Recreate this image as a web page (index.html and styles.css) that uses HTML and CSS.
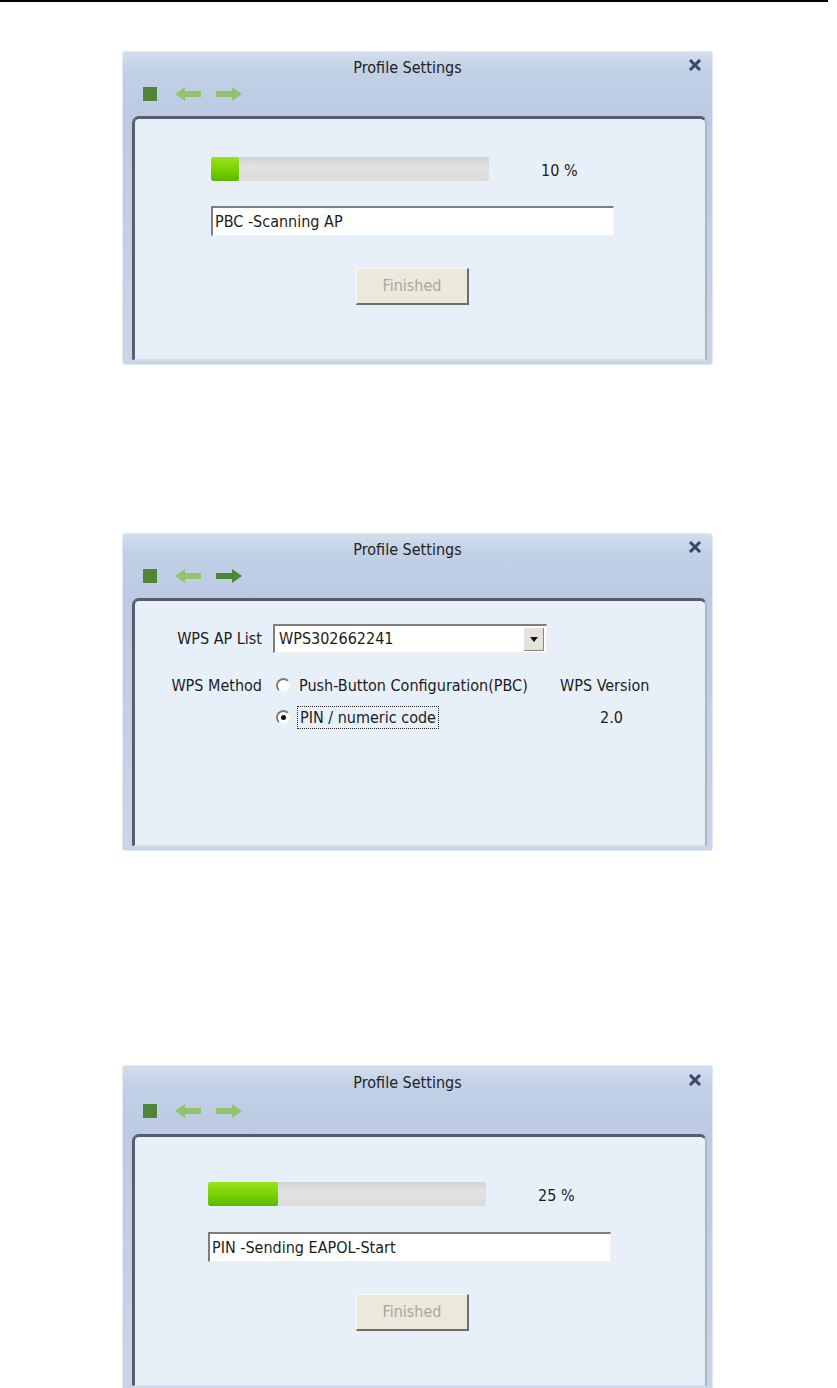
FILE: index.html
```html
<!DOCTYPE html>
<html lang="en">
<head>
    <meta charset="UTF-8">
    <title>Profile Settings</title>
    <link rel="stylesheet" href="styles.css">
</head>
<body>
    <div class="rule"></div>

    <!-- PBC scanning -->
    <div class="window win-first">
        <div class="titlebar">
            <span></span>
            <span class="title">Profile Settings</span>
            <svg class="close" viewBox="0 0 14 12"><path d="M2 1 L12 11 M12 1 L2 11"/></svg>
        </div>
        <div class="toolbar">
            <span class="stop"></span>
            <svg class="arrow off" viewBox="0 0 26 14"><path d="M0 7 L10 0 L10 4 L26 4 L26 10 L10 10 L10 14 Z"/></svg>
            <svg class="arrow off" viewBox="0 0 26 14"><path d="M26 7 L16 0 L16 4 L0 4 L0 10 L16 10 L16 14 Z"/></svg>
        </div>
        <div class="panel progress-panel">
            <div class="progress-row">
                <div class="bar"><div class="fill" style="width: 10%"></div></div>
                <span class="pct">10 %</span>
            </div>
            <div class="status">PBC -Scanning AP</div>
            <div class="btn">Finished</div>
        </div>
    </div>

    <!-- WPS method select -->
    <div class="window win-second">
        <div class="titlebar">
            <span></span>
            <span class="title">Profile Settings</span>
            <svg class="close" viewBox="0 0 14 12"><path d="M2 1 L12 11 M12 1 L2 11"/></svg>
        </div>
        <div class="toolbar">
            <span class="stop"></span>
            <svg class="arrow off" viewBox="0 0 26 14"><path d="M0 7 L10 0 L10 4 L26 4 L26 10 L10 10 L10 14 Z"/></svg>
            <svg class="arrow on" viewBox="0 0 26 14"><path d="M26 7 L16 0 L16 4 L0 4 L0 10 L16 10 L16 14 Z"/></svg>
        </div>
        <div class="panel wps-panel">
            <div class="wps-grid">
                <span class="label first">WPS AP List</span>
                <div class="select">
                    <span class="select-text">WPS302662241</span>
                    <span class="select-btn"><svg viewBox="0 0 8 5"><path d="M0 0 L8 0 L4 5 Z"/></svg></span>
                </div>
                <span></span>

                <span class="label">WPS Method</span>
                <div class="radio-item"><span class="radio"></span><span>Push-Button Configuration(PBC)</span></div>
                <span class="version">WPS Version</span>

                <span></span>
                <div class="radio-item"><span class="radio checked"></span><span class="focus">PIN / numeric code</span></div>
                <span class="version num">2.0</span>
            </div>
        </div>
    </div>

    <!-- PIN sending -->
    <div class="window win-third">
        <div class="titlebar">
            <span></span>
            <span class="title">Profile Settings</span>
            <svg class="close" viewBox="0 0 14 12"><path d="M2 1 L12 11 M12 1 L2 11"/></svg>
        </div>
        <div class="toolbar">
            <span class="stop"></span>
            <svg class="arrow off" viewBox="0 0 26 14"><path d="M0 7 L10 0 L10 4 L26 4 L26 10 L10 10 L10 14 Z"/></svg>
            <svg class="arrow off" viewBox="0 0 26 14"><path d="M26 7 L16 0 L16 4 L0 4 L0 10 L16 10 L16 14 Z"/></svg>
        </div>
        <div class="panel progress-panel">
            <div class="progress-row">
                <div class="bar"><div class="fill" style="width: 25%"></div></div>
                <span class="pct">25 %</span>
            </div>
            <div class="status">PIN -Sending EAPOL-Start</div>
            <div class="btn">Finished</div>
        </div>
    </div>
</body>
</html>
```

FILE: styles.css
```css
body { margin: 0; background: #fff; font-family: "DejaVu Sans Condensed", "DejaVu Sans", sans-serif; font-stretch: condensed; font-size: 16px; color: #1c1c1c; }

.rule { width: 828px; height: 2px; background: #000; }

/* dialog frame */
.window { width: 589px; margin-left: 122px; border: 1px solid #e2e8f2; border-radius: 3px;
    background: linear-gradient(to bottom, #d3ddec 0, #c3d1e7 18px, #bccbe3 60px, #c9d5e8 100%); }
.win-first { margin-top: 49px; }
.win-second { margin-top: 168px; }
.win-third { margin-top: 214px; }

.titlebar { display: grid; grid-template-columns: 1fr auto 1fr; height: 31px; align-items: center; }
.win-third .titlebar { height: 33px; }
.title { color: #222; margin-right: 20px; }
.close { justify-self: end; width: 14px; height: 12px; margin-right: 10px; margin-top: -6px; }
.close path { stroke: #3a4865; stroke-width: 3; fill: none; }

.toolbar { display: flex; align-items: flex-start; height: 29px; padding: 4px 0 0 20px; }
.win-third .toolbar { height: 30px; padding-top: 5px; }
.stop { width: 14px; height: 14px; background: #4e8537; margin-right: 18px; }
.arrow { width: 26px; height: 14px; margin-right: 15px; }
.arrow.off path { fill: #92c36f; }
.arrow.on path { fill: #4a8a35; }

/* inner panel */
.panel { margin: 0 5px 3px 9px; background: #e7f0f9; border-radius: 7px 7px 3px 3px;
    border-top: 3px solid #555d6a; border-left: 3px solid #58606c; border-right: 2px solid #aab4c3; border-bottom: 2px solid #d6dee9; }

.progress-panel { padding: 38px 0 54px 76px; }
.win-third .progress-panel { padding: 45px 0 54px 73px; }
.progress-row { display: flex; align-items: center; height: 24px; }
.bar { width: 278px; height: 24px; background: linear-gradient(to bottom, #d2d2d2, #e2e2e2 40%, #dcdcdc); border-radius: 2px; overflow: hidden; }
.fill { height: 100%; background: linear-gradient(to bottom, #9be21f, #7ad400 50%, #5eb500); border-radius: 2px; }
.pct { margin-left: 52px; margin-top: 3px; }

.status { width: 398px; height: 27px; line-height: 27px; margin-top: 25px; padding-left: 2px; background: #fff;
    border-top: 2px solid #7e7e7e; border-left: 2px solid #7e7e7e; border-right: 1px solid #f2f2f2; border-bottom: 1px solid #f2f2f2; }
.win-third .status { margin-top: 26px; }

.btn { width: 110px; height: 34px; line-height: 34px; margin: 32px 0 0 145px; text-align: center; color: #a9a89c; background: #ebe8dc;
    border-top: 1px solid #f8f7f2; border-left: 1px solid #f8f7f2; border-right: 2px solid #6f6d65; border-bottom: 2px solid #6f6d65; }
.win-third .btn { margin-left: 148px; }

/* WPS selection */
.wps-panel { box-sizing: border-box; height: 249px; padding-top: 23px; }
.wps-grid { display: grid; grid-template-columns: 138px 287px auto; grid-template-rows: 45px 32px 32px; align-items: center; }
.label { text-align: right; padding-right: 11px; }
.label.first { align-self: start; line-height: 30px; }
.select { display: flex; width: 271px; height: 26px; background: #fff; border-top: 2px solid #7e7e7e; border-left: 2px solid #7e7e7e; border-right: 1px solid #f0f0f0; border-bottom: 1px solid #f0f0f0; align-self: start; }
.select-text { flex: 1; line-height: 26px; padding-left: 4px; }
.select-btn { width: 19px; height: 22px; margin: 2px 2px 0 0; background: #e4e2da; border-right: 1px solid #8a887f; border-bottom: 1px solid #8a887f; display: flex; align-items: center; justify-content: center; }
.select-btn svg { width: 8px; height: 5px; }
.select-btn path { fill: #111; }

.radio-item { display: flex; align-items: center; padding-left: 3px; }
.radio { width: 11px; height: 11px; border-radius: 50%; background: #fff; margin-right: 8px; border: 2px solid; border-color: #7d7d7d #eef0f2 #eef0f2 #7d7d7d; position: relative; }
.radio.checked::after { content: ""; position: absolute; left: 3px; top: 3px; width: 5px; height: 5px; border-radius: 50%; background: #111; }
.focus { outline: 1px dotted #222; outline-offset: 1px; padding: 0 1px; }
.version.num { padding-left: 40px; }
```
